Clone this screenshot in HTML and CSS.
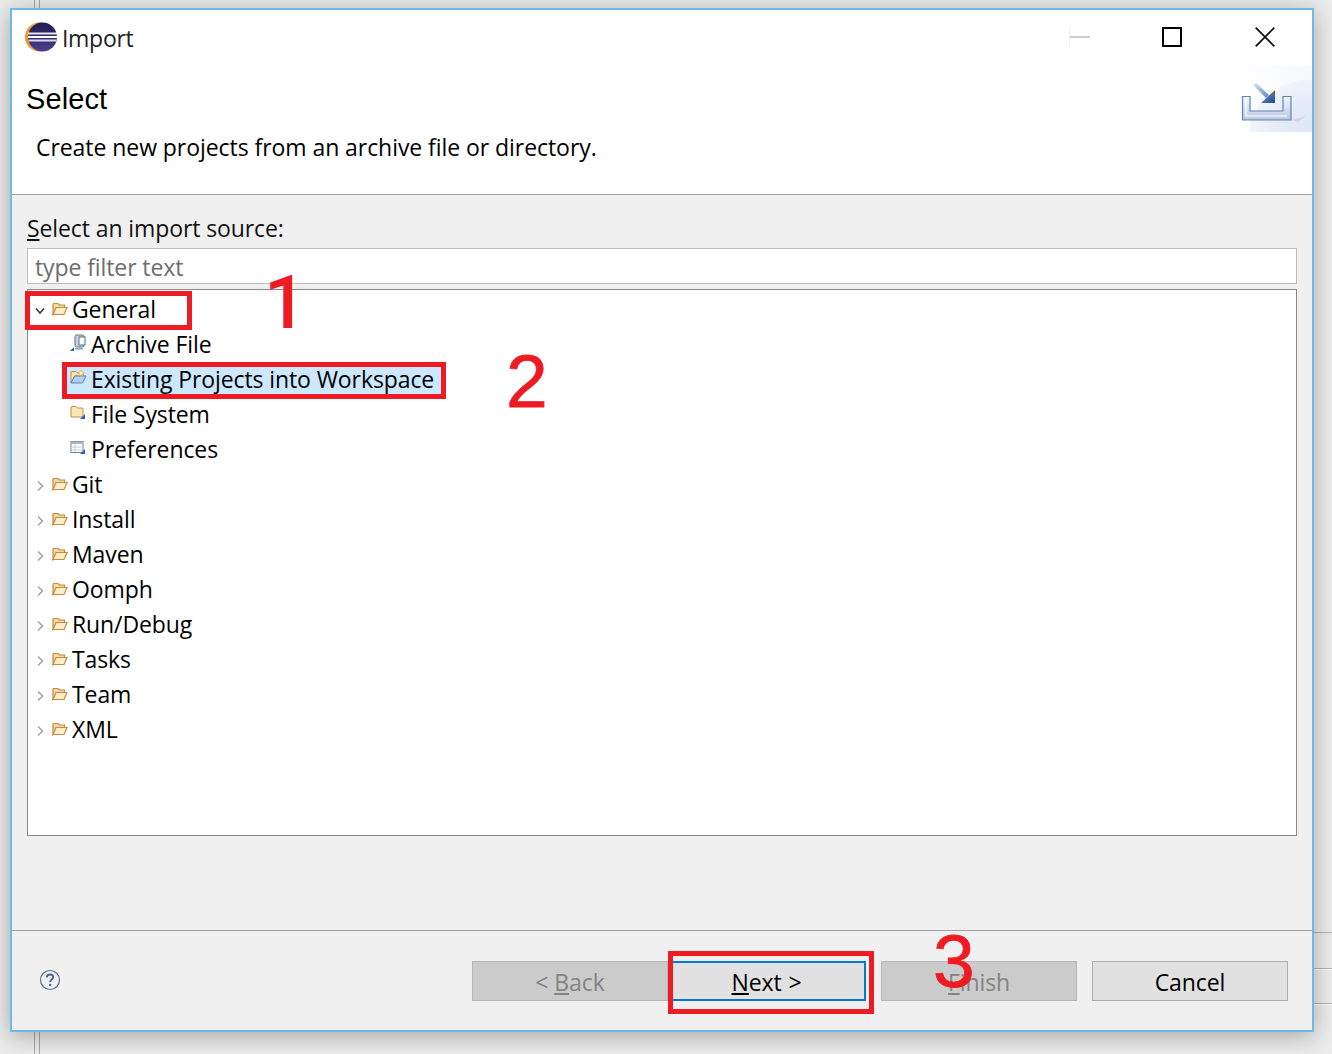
FILE: index.html
```html
<!DOCTYPE html>
<html lang="en">
<head>
<meta charset="utf-8">
<title>Import</title>
<link rel="stylesheet" href="styles.css">
</head>
<body>
<svg class="defs" width="0" height="0" aria-hidden="true">
  <defs>
    <symbol id="folder" viewBox="0 0 16 14">
      <path d="M1 12.5V2.5Q1 1.5 2 1.5H6L7.5 3H12.5V5.5H5L1 12.5Z" fill="#f6d99c" stroke="#c08a48" stroke-width="1.2"/>
      <path d="M1 12.5L4 5.5H15L12 12.5H1Z" fill="#fdeecb" stroke="#c9893f" stroke-width="1.2"/>
    </symbol>
    <symbol id="chev-r" viewBox="0 0 10 12">
      <path d="M3 1.5L7.5 6L3 10.5" fill="none" stroke="#a6a6a6" stroke-width="1.6"/>
    </symbol>
    <symbol id="chev-d" viewBox="0 0 12 10">
      <path d="M2 2.5L6 7L10 2.5" fill="none" stroke="#404040" stroke-width="1.7"/>
    </symbol>
  </defs>
</svg>

<div class="bg-line bg-top-a"></div>
<div class="bg-line bg-top-b"></div>
<div class="bg-line bg-bot-a"></div>
<div class="bg-line bg-bot-b"></div>
<div class="bg-hline bg-r1"></div>
<div class="bg-hline bg-r2"></div>
<div class="bg-hline bg-r3"></div>

<main class="window">
  <header class="head">
    <div class="titlebar">
      <svg class="app-icon" width="33" height="30" viewBox="0 0 33 30">
        <defs>
          <linearGradient id="ecl" x1="0" y1="0" x2="0" y2="1">
            <stop offset="0" stop-color="#1f1b52"/>
            <stop offset="1" stop-color="#4a3f8f"/>
          </linearGradient>
        </defs>
        <circle cx="15.5" cy="15" r="14.5" fill="#f09a2c"/>
        <circle cx="18.5" cy="15" r="14.5" fill="url(#ecl)"/>
        <rect x="4" y="10.5" width="29" height="2" fill="#e9e6f4"/>
        <rect x="4" y="14" width="29" height="2" fill="#ffffff"/>
        <rect x="4.5" y="17.5" width="28" height="2" fill="#d9d5ec"/>
      </svg>
      <span class="title">Import</span>
      <div class="controls">
        <svg class="ctl ctl-min" width="22" height="20" viewBox="0 0 22 20"><path d="M.5 0V20" stroke="#eeeeee"/><path d="M1 10H21" stroke="#cccccc" stroke-width="2"/></svg>
        <svg class="ctl ctl-max" width="20" height="20" viewBox="0 0 20 20"><rect x="1" y="1" width="18" height="18" fill="none" stroke="#000" stroke-width="2"/></svg>
        <svg class="ctl ctl-close" width="20" height="20" viewBox="0 0 20 20"><path d="M.7 .7L19.3 19.3M19.3 .7L.7 19.3" stroke="#111" stroke-width="1.8"/></svg>
      </div>
    </div>
    <h1 class="page-title">Select</h1>
    <p class="page-desc">Create new projects from an archive file or directory.</p>
    <div class="banner" aria-hidden="true">
      <svg width="72" height="66" viewBox="0 0 72 66">
        <defs>
          <linearGradient id="tray" x1="0" y1="0" x2="0" y2="1">
            <stop offset="0" stop-color="#f2f5fb"/>
            <stop offset="1" stop-color="#b9c9e3"/>
          </linearGradient>
          <linearGradient id="arrow" x1="0" y1="0" x2="1" y2="1">
            <stop offset="0" stop-color="#dbe4f2"/>
            <stop offset="1" stop-color="#5f86bd"/>
          </linearGradient>
          <linearGradient id="head" x1="0" y1="0" x2="1" y2="1">
            <stop offset="0" stop-color="#7fa0cc"/>
            <stop offset="1" stop-color="#1f4a8c"/>
          </linearGradient>
        </defs>
        <path d="M2.5 30.5H10V45H43V30.5H51V54H2.5Z" fill="url(#tray)" stroke="#5f83b8" stroke-width="1.2"/>
        <path d="M6 34V50H47" stroke="#ffffff" stroke-width="1.2" fill="none"/>
        <path d="M52 54L66 50L58 56Z" fill="#d9cfe0"/>
        <path d="M26 24L38 22L35 34Z" fill="#fffbd6"/>
        <path d="M13 19L16 17L29 29L26 32Z" fill="url(#arrow)"/>
        <path d="M35 24V37H21Z" fill="url(#head)"/>
      </svg>
    </div>
  </header>

  <section class="body">
    <label class="src-label" for="filter"><u>S</u>elect an import source:</label>
    <input class="filter" id="filter" type="text" placeholder="type filter text">
    <ul class="tree">
      <li class="row">
        <svg class="twisty" width="12" height="10"><use href="#chev-d"/></svg>
        <svg class="folder" width="16" height="14"><use href="#folder"/></svg>
        <span class="lbl">General</span>
      </li>
      <li class="row child">
        <svg class="leaf" width="17" height="18" viewBox="0 0 17 18">
          <rect x="5" y="1" width="9" height="12" rx="1.5" fill="#c9d3e0" stroke="#5d6f8c"/>
          <rect x="9" y="3" width="6" height="8" fill="#fff" stroke="#5d6f8c"/>
          <path d="M5 14H13V15.5H5Z" fill="#8ea0ba"/>
          <path d="M0 17L4 13V17Z" fill="#2a66ad"/>
        </svg>
        <span class="lbl">Archive File</span>
      </li>
      <li class="row child">
        <span class="selected">
          <svg class="leaf" width="17" height="15" viewBox="0 0 17 15">
            <path d="M1 13V2.5Q1 1.5 2 1.5H6L7.5 3H13V6H5L1 13Z" fill="#fbe3ac" stroke="#b98a4c"/>
            <path d="M1 13L4.5 6H16L12.5 13H1Z" fill="#b5cfee" stroke="#5d83b5"/>
            <path d="M11 0L12 2L14.5 2.5L12.5 4L13 6L11 5L9 6L9.5 4L8 2.5L10 2Z" fill="#fff6b8" stroke="#c9a43c" stroke-width=".6"/>
          </svg>
          <span class="lbl">Existing Projects into Workspace</span>
        </span>
      </li>
      <li class="row child">
        <svg class="leaf" width="17" height="15" viewBox="0 0 17 15">
          <path d="M1 12V2.5Q1 1.5 2 1.5H6L7.5 3H12Q13 3 13 4V12Z" fill="#fce6b2" stroke="#bc8c4c"/>
          <path d="M10 14L15 9V14Z" fill="#2a66ad"/>
        </svg>
        <span class="lbl">File System</span>
      </li>
      <li class="row child">
        <svg class="leaf" width="17" height="15" viewBox="0 0 17 15">
          <rect x="1" y="1.5" width="12" height="11" fill="#fff" stroke="#6f7f99"/>
          <rect x="1" y="1.5" width="12" height="2.5" fill="#aab7cc"/>
          <path d="M5 4V12M1 7H13M1 10H13" stroke="#c5cede"/>
          <path d="M10 14L15 9V14Z" fill="#2a66ad"/>
        </svg>
        <span class="lbl">Preferences</span>
      </li>
      <li class="row"><svg class="twisty" width="12" height="12" viewBox="0 0 12 12"><use href="#chev-r"/></svg><svg class="folder" width="16" height="14"><use href="#folder"/></svg><span class="lbl">Git</span></li>
      <li class="row"><svg class="twisty" width="12" height="12" viewBox="0 0 12 12"><use href="#chev-r"/></svg><svg class="folder" width="16" height="14"><use href="#folder"/></svg><span class="lbl">Install</span></li>
      <li class="row"><svg class="twisty" width="12" height="12" viewBox="0 0 12 12"><use href="#chev-r"/></svg><svg class="folder" width="16" height="14"><use href="#folder"/></svg><span class="lbl">Maven</span></li>
      <li class="row"><svg class="twisty" width="12" height="12" viewBox="0 0 12 12"><use href="#chev-r"/></svg><svg class="folder" width="16" height="14"><use href="#folder"/></svg><span class="lbl">Oomph</span></li>
      <li class="row"><svg class="twisty" width="12" height="12" viewBox="0 0 12 12"><use href="#chev-r"/></svg><svg class="folder" width="16" height="14"><use href="#folder"/></svg><span class="lbl">Run/Debug</span></li>
      <li class="row"><svg class="twisty" width="12" height="12" viewBox="0 0 12 12"><use href="#chev-r"/></svg><svg class="folder" width="16" height="14"><use href="#folder"/></svg><span class="lbl">Tasks</span></li>
      <li class="row"><svg class="twisty" width="12" height="12" viewBox="0 0 12 12"><use href="#chev-r"/></svg><svg class="folder" width="16" height="14"><use href="#folder"/></svg><span class="lbl">Team</span></li>
      <li class="row"><svg class="twisty" width="12" height="12" viewBox="0 0 12 12"><use href="#chev-r"/></svg><svg class="folder" width="16" height="14"><use href="#folder"/></svg><span class="lbl">XML</span></li>
    </ul>
  </section>

  <footer class="foot">
    <svg class="help" width="22" height="22" viewBox="0 0 22 22">
      <circle cx="11" cy="11" r="9.5" fill="none" stroke="#5b6f96" stroke-width="1.2"/>
      <path d="M7.8 8.3C8 6.4 9.4 5.5 11 5.5C12.8 5.5 14.2 6.6 14.2 8.2C14.2 10.4 11.2 10.4 11.2 13" fill="none" stroke="#4f638c" stroke-width="1.9"/>
      <circle cx="11.2" cy="15.9" r="1.2" fill="#4f638c"/>
    </svg>
    <div class="buttons">
      <div class="nav-pair">
        <button class="btn btn-off" type="button" disabled>&lt; <u>B</u>ack</button>
        <button class="btn btn-default" type="button"><u>N</u>ext &gt;</button>
      </div>
      <button class="btn btn-off" type="button" disabled><u>F</u>inish</button>
      <button class="btn" type="button">Cancel</button>
    </div>
  </footer>
</main>

<div class="mark mark-1"></div>
<div class="mark mark-2"></div>
<div class="mark mark-3"></div>
<span class="digit digit-1">1</span>
<span class="digit digit-2">2</span>
<span class="digit digit-3">3</span>
</body>
</html>
```

FILE: styles.css
```css
* { box-sizing: border-box; }

html, body {
  margin: 0;
  height: 1054px;
  overflow: hidden;
}

body {
  position: relative;
  background: #ececec;
  font-family: "Open Sans", "Noto Sans", sans-serif;
  font-size: 23px;
  letter-spacing: -.1px;
  color: #000;
}

.defs { position: absolute; }

.bg-line { position: absolute; width: 1px; background: #a8a8a8; }
.bg-top-a { left: 34px; top: 0; height: 10px; }
.bg-top-b { left: 39px; top: 0; height: 10px; }
.bg-bot-a { left: 34px; top: 1032px; height: 22px; }
.bg-bot-b { left: 39px; top: 1032px; height: 22px; }
.bg-hline { position: absolute; left: 1313px; width: 19px; height: 1px; background: #b4b4b4; }
.bg-r1 { top: 932px; }
.bg-r2 { top: 968px; box-shadow: 0 1px 0 #fff; }
.bg-r3 { top: 1003px; box-shadow: 0 1px 0 #fff; }

.window {
  position: absolute;
  left: 10px;
  top: 8px;
  width: 1304px;
  height: 1024px;
  border: 2px solid #6cb9ee;
  background: #f0f0f0;
  box-shadow: 0 4px 22px rgba(0, 0, 0, .3);
  display: flex;
  flex-direction: column;
}

.head {
  position: relative;
  height: 185px;
  background: #fff;
  border-bottom: 1px solid #a0a0a0;
  flex: none;
}

.titlebar {
  display: flex;
  align-items: center;
  height: 54px;
  padding-left: 12px;
}

.app-icon { flex: none; }

.title {
  margin: 2px 0 0 5px;
  font-size: 23px;
  letter-spacing: -.3px;
  color: #222;
}

.controls {
  margin-left: auto;
  display: flex;
  align-items: center;
  padding-right: 37px;
}

.ctl-min { margin-right: 71px; }
.ctl-max { margin-right: 73px; }

.page-title {
  margin: 18px 0 0;
  padding-left: 14px;
  font-family: "Liberation Sans", sans-serif;
  font-size: 29px;
  font-weight: 400;
  letter-spacing: .1px;
  line-height: 34px;
  height: 36px;
}

.page-desc {
  margin: 13px 0 0;
  padding-left: 24px;
  font-size: 23px;
  letter-spacing: -.06px;
  line-height: 32px;
}

.banner {
  position: absolute;
  right: 0;
  top: 56px;
  width: 72px;
  height: 66px;
  background:
    radial-gradient(ellipse 62px 52px at 100% 100%, #dfe5f6 0, #e6ebf8 60%, rgba(240,243,251,.9) 100%, transparent 101%),
    linear-gradient(to right, #fff 0, #f6f8fd 100%);
}

.banner svg { display: block; }

.body {
  flex: 1;
  display: flex;
  flex-direction: column;
  min-height: 0;
  padding: 15px 15px 0;
  border-bottom: 1px solid #a0a0a0;
}

.src-label {
  display: block;
  line-height: 36px;
  height: 38px;
  color: #111;
}

.filter {
  display: block;
  width: 1270px;
  height: 36px;
  border: 1px solid #bdbdbd;
  background: #fff;
  padding: 2px 7px 0;
  font: inherit;
  letter-spacing: inherit;
  outline: none;
}

.filter::placeholder { color: #6d6d6d; opacity: 1; }

.tree {
  list-style: none;
  width: 1270px;
  height: 547px;
  margin: 5px 0 0;
  padding: 3px 0 0;
  background: #fff;
  border: 1px solid #8a8a8a;
}

.row {
  display: flex;
  align-items: center;
  height: 35px;
  padding-left: 6px;
  white-space: nowrap;
}

.lbl { margin-top: -4px; }

.twisty { flex: none; margin-right: 6px; }
.folder { flex: none; margin-right: 4px; margin-top: -3px; }

.row.child { padding-left: 42px; }

.leaf { flex: none; margin-right: 4px; margin-top: -6px; }

.selected {
  display: flex;
  align-items: center;
  height: 33px;
  width: 374px;
  margin-left: -3px;
  padding-left: 3px;
  background: #cce8ff;
}

.foot {
  flex: none;
  height: 99px;
  display: flex;
  align-items: center;
  padding: 0 24px 0 27px;
  background: #f0f0f0;
}

.help { flex: none; margin-top: -1px; }

.buttons {
  margin-left: auto;
  display: flex;
  gap: 15px;
  margin-top: 0;
}

.nav-pair { display: flex; gap: 2px; }

.btn {
  width: 196px;
  height: 40px;
  padding: 2px 0 0;
  border: 1px solid #adadad;
  background: #e1e1e1;
  color: #000;
  font: inherit;
  letter-spacing: inherit;
}

.btn-off {
  background: #cbcbcb;
  border-color: #b6b6b6;
  color: #838383;
}

.btn-default {
  border: 2px solid #0078d7;
  padding-right: 3px;
  word-spacing: 1px;
}

.mark {
  position: absolute;
  border: 5px solid #ed1c24;
}

.mark-1 { left: 25px; top: 291px; width: 167px; height: 39px; }
.mark-2 { left: 62px; top: 362px; width: 384px; height: 37px; }
.mark-3 { left: 668px; top: 951px; width: 206px; height: 63px; }

.digit {
  position: absolute;
  font-family: "Liberation Sans", sans-serif;
  font-size: 75px;
  line-height: 75px;
  letter-spacing: 0;
  color: #ed1c24;
  -webkit-text-stroke: .8px #ed1c24;
}

.digit-1 { left: 264px; top: 265px; font-family: Roboto, sans-serif; font-weight: 500; -webkit-text-stroke: 0; }
.digit-2 { left: 506px; top: 344px; }
.digit-3 { left: 933px; top: 924px; }
```
